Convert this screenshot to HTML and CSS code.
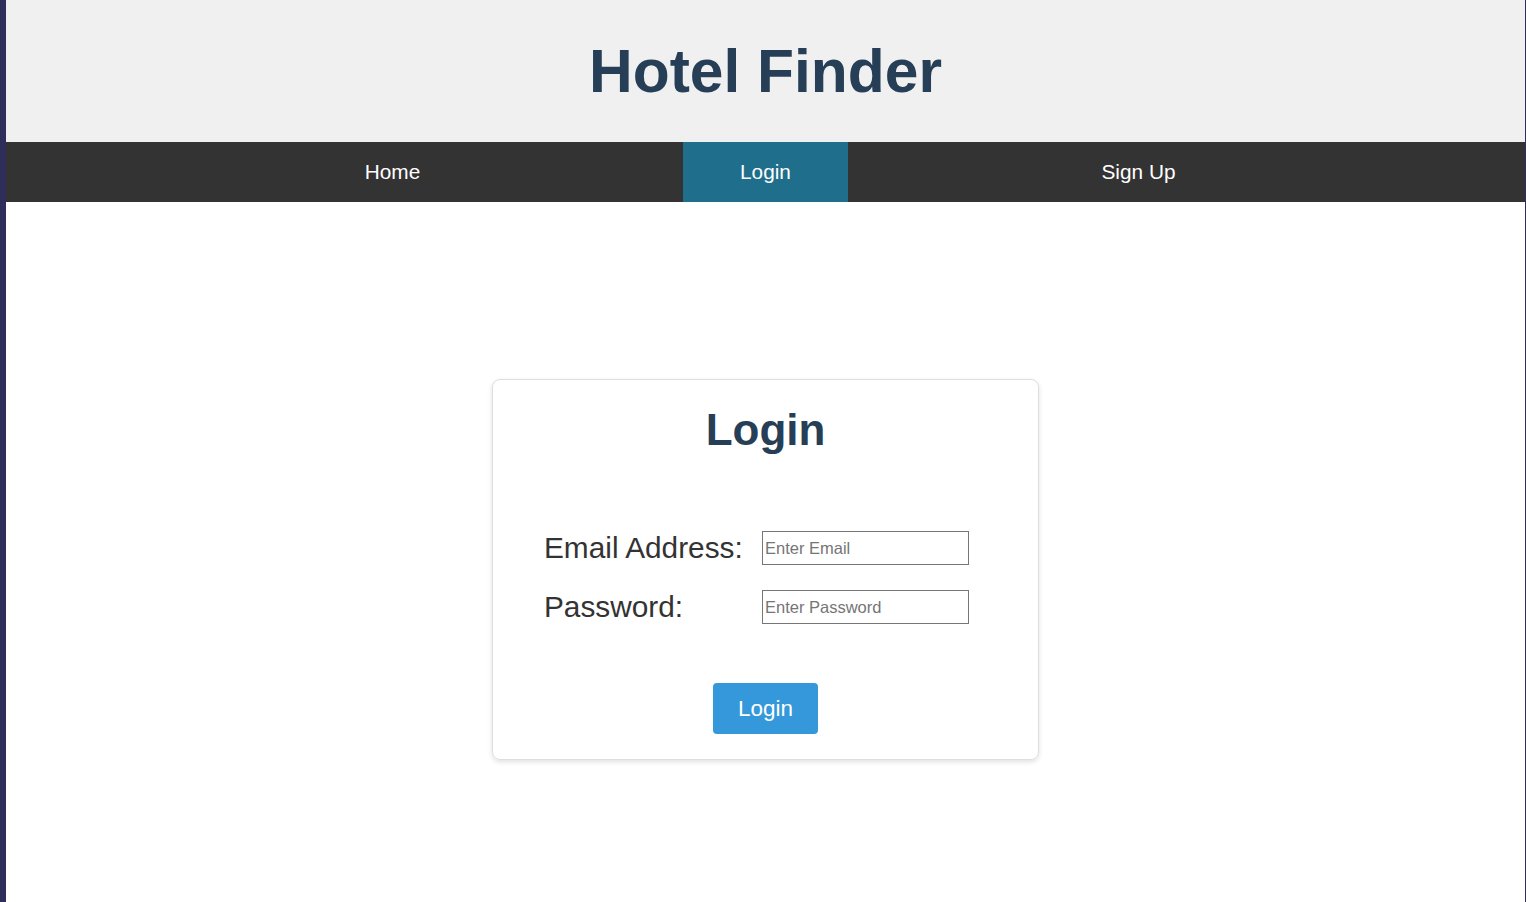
FILE: index.html
```html
<!DOCTYPE html>
<html lang="en">
<head>
<meta charset="utf-8">
<title>Hotel Finder - Login</title>
<link rel="stylesheet" href="styles.css">
</head>
<body>
<div class="page">
  <header class="site-header">
    <h1 class="site-title">Hotel Finder</h1>
  </header>
  <nav class="site-nav">
    <div class="nav-cell"><a class="nav-link" href="#">Home</a></div>
    <div class="nav-cell"><a class="nav-link active" href="#">Login</a></div>
    <div class="nav-cell"><a class="nav-link" href="#">Sign Up</a></div>
  </nav>
  <main class="main">
    <section class="card">
      <h2 class="card-title">Login</h2>
      <form class="login-form">
        <div class="form-grid">
          <label class="form-label" for="email">Email Address:</label>
          <input class="form-input" id="email" type="email" placeholder="Enter Email">
          <label class="form-label" for="password">Password:</label>
          <input class="form-input" id="password" type="password" placeholder="Enter Password">
        </div>
        <div class="form-actions">
          <button class="btn" type="button">Login</button>
        </div>
      </form>
    </section>
  </main>
</div>
</body>
</html>
```

FILE: styles.css
```css
html, body {
  margin: 0;
  padding: 0;
  height: 100%;
}
body {
  background: #2f2e5b;
  font-family: "Liberation Sans", Arial, sans-serif;
  color: #333;
}
.page {
  margin: 0 1px 0 6px;
  min-height: 100%;
  background: #fff;
}
.site-header {
  background: #f0f0f0;
  height: 142px;
  display: flex;
  align-items: center;
  justify-content: center;
}
.site-title {
  margin: 0;
  font-size: 60.5px;
  font-weight: bold;
  color: #263f57;
  line-height: 1;
}
.site-nav {
  background: #333;
  height: 60px;
  display: flex;
  justify-content: center;
}
.nav-cell {
  width: 373px;
  display: flex;
  justify-content: center;
}
.nav-link {
  display: flex;
  align-items: center;
  justify-content: center;
  color: #fff;
  text-decoration: none;
  font-size: 20.8px;
  padding: 0 57px;
}
.nav-link.active {
  background: #1f6e8c;
}
.main {
  padding-top: 177px;
  display: flex;
  justify-content: center;
}
.card {
  width: 545px;
  height: 379px;
  border: 1px solid #dedede;
  border-radius: 8px;
  box-shadow: 0 2px 5px rgba(0, 0, 0, 0.12);
  box-sizing: content-box;
}
.card-title {
  margin: 24px 0 0;
  text-align: center;
  font-size: 44px;
  line-height: 52px;
  font-weight: bold;
  color: #263f57;
}
.login-form {
  margin-top: 75px;
}
.form-grid {
  display: grid;
  grid-template-columns: 218px 207px;
  row-gap: 25px;
  align-items: center;
  padding-left: 51px;
}
.form-label {
  font-size: 29.8px;
  color: #333;
  line-height: 34px;
}
.form-input {
  box-sizing: border-box;
  width: 207px;
  height: 34px;
  margin: 0;
  padding: 1px 2px;
  border: 1px solid #767676;
  font-family: "Liberation Sans", Arial, sans-serif;
  font-size: 16.5px;
  color: #333;
  background: #fff;
}
.form-input::placeholder {
  color: #757575;
}
.form-actions {
  display: flex;
  justify-content: center;
  margin-top: 59px;
}
.btn {
  width: 105px;
  height: 51px;
  border: none;
  border-radius: 4px;
  background: #3498db;
  color: #fff;
  font-family: "Liberation Sans", Arial, sans-serif;
  font-size: 22.5px;
  cursor: pointer;
}
```
